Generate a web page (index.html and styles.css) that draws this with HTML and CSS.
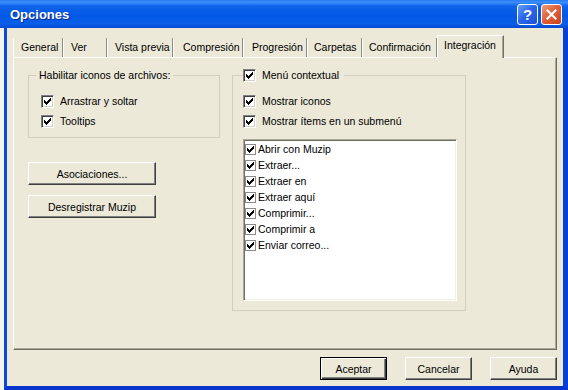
FILE: index.html
```html
<!DOCTYPE html>
<html lang="es">
<head>
  <meta charset="UTF-8">
  <title>Opciones</title>
  <link rel="stylesheet" href="styles.css">
</head>
<body>

  <div class="window">
    <!-- Title bar -->
    <div class="titlebar">
      <span class="title">Opciones</span>
      <div class="caption-btns">
        <span class="cap-btn cap-help">?</span>
        <span class="cap-btn cap-close">
          <svg width="11" height="11" viewBox="0 0 11 11"><path d="M1.5 1.5 9.5 9.5M9.5 1.5 1.5 9.5" stroke="#fff" stroke-width="2.2" stroke-linecap="square"/></svg>
        </span>
      </div>
    </div>

    <div class="frame">
      <!-- Tabs -->
      <div class="tabs">
        <span class="tab tab-general">General</span>
        <span class="tab tab-ver">Ver</span>
        <span class="tab tab-vista">Vista previa</span>
        <span class="tab tab-compresion">Compresión</span>
        <span class="tab tab-progresion">Progresión</span>
        <span class="tab tab-carpetas">Carpetas</span>
        <span class="tab tab-confirmacion">Confirmación</span>
        <span class="tab tab-integracion active">Integración</span>
      </div>

      <!-- Tab page -->
      <div class="panel">
        <div class="col-left">
          <fieldset class="group group-files">
            <legend>Habilitar iconos de archivos:</legend>
            <div class="check-row">
              <span class="cb"><svg width="7" height="7" viewBox="0 0 7 7"><path d="M0 2h1v1h1v1h1v-1h1v-1h1v-1h1v-1h1v3h-1v1h-1v1h-1v1h-1v1h-1v-1h-1v-1h-1v-1h-1z"/></svg></span>
              <span>Arrastrar y soltar</span>
            </div>
            <div class="check-row">
              <span class="cb"><svg width="7" height="7" viewBox="0 0 7 7"><path d="M0 2h1v1h1v1h1v-1h1v-1h1v-1h1v-1h1v3h-1v1h-1v1h-1v1h-1v1h-1v-1h-1v-1h-1v-1h-1z"/></svg></span>
              <span>Tooltips</span>
            </div>
          </fieldset>

          <button class="btn btn-wide btn-assoc">Asociaciones...</button>
          <button class="btn btn-wide btn-unreg">Desregistrar Muzip</button>
        </div>

        <fieldset class="group group-menu">
          <legend>
            <span class="legend-check">
              <span class="cb"><svg width="7" height="7" viewBox="0 0 7 7"><path d="M0 2h1v1h1v1h1v-1h1v-1h1v-1h1v-1h1v3h-1v1h-1v1h-1v1h-1v1h-1v-1h-1v-1h-1v-1h-1z"/></svg></span>
              <span>Menú contextual</span>
            </span>
          </legend>
          <div class="check-row">
            <span class="cb"><svg width="7" height="7" viewBox="0 0 7 7"><path d="M0 2h1v1h1v1h1v-1h1v-1h1v-1h1v-1h1v3h-1v1h-1v1h-1v1h-1v1h-1v-1h-1v-1h-1v-1h-1z"/></svg></span>
            <span>Mostrar iconos</span>
          </div>
          <div class="check-row">
            <span class="cb"><svg width="7" height="7" viewBox="0 0 7 7"><path d="M0 2h1v1h1v1h1v-1h1v-1h1v-1h1v-1h1v3h-1v1h-1v1h-1v1h-1v1h-1v-1h-1v-1h-1v-1h-1z"/></svg></span>
            <span>Mostrar ítems en un submenú</span>
          </div>

          <!-- Context menu entries -->
          <div class="list">
            <div class="list-item"><span class="cb-small"><svg width="7" height="7" viewBox="0 0 7 7"><path d="M0 2h1v1h1v1h1v-1h1v-1h1v-1h1v-1h1v3h-1v1h-1v1h-1v1h-1v1h-1v-1h-1v-1h-1v-1h-1z"/></svg></span><span>Abrir con Muzip</span></div>
            <div class="list-item"><span class="cb-small"><svg width="7" height="7" viewBox="0 0 7 7"><path d="M0 2h1v1h1v1h1v-1h1v-1h1v-1h1v-1h1v3h-1v1h-1v1h-1v1h-1v1h-1v-1h-1v-1h-1v-1h-1z"/></svg></span><span>Extraer...</span></div>
            <div class="list-item"><span class="cb-small"><svg width="7" height="7" viewBox="0 0 7 7"><path d="M0 2h1v1h1v1h1v-1h1v-1h1v-1h1v-1h1v3h-1v1h-1v1h-1v1h-1v1h-1v-1h-1v-1h-1v-1h-1z"/></svg></span><span>Extraer en</span></div>
            <div class="list-item"><span class="cb-small"><svg width="7" height="7" viewBox="0 0 7 7"><path d="M0 2h1v1h1v1h1v-1h1v-1h1v-1h1v-1h1v3h-1v1h-1v1h-1v1h-1v1h-1v-1h-1v-1h-1v-1h-1z"/></svg></span><span>Extraer aquí</span></div>
            <div class="list-item"><span class="cb-small"><svg width="7" height="7" viewBox="0 0 7 7"><path d="M0 2h1v1h1v1h1v-1h1v-1h1v-1h1v-1h1v3h-1v1h-1v1h-1v1h-1v1h-1v-1h-1v-1h-1v-1h-1z"/></svg></span><span>Comprimir...</span></div>
            <div class="list-item"><span class="cb-small"><svg width="7" height="7" viewBox="0 0 7 7"><path d="M0 2h1v1h1v1h1v-1h1v-1h1v-1h1v-1h1v3h-1v1h-1v1h-1v1h-1v1h-1v-1h-1v-1h-1v-1h-1z"/></svg></span><span>Comprimir a</span></div>
            <div class="list-item"><span class="cb-small"><svg width="7" height="7" viewBox="0 0 7 7"><path d="M0 2h1v1h1v1h1v-1h1v-1h1v-1h1v-1h1v3h-1v1h-1v1h-1v1h-1v1h-1v-1h-1v-1h-1v-1h-1z"/></svg></span><span>Enviar correo...</span></div>
          </div>
        </fieldset>
      </div>

      <!-- Dialog buttons -->
      <div class="footer">
        <button class="btn btn-small btn-default">Aceptar</button>
        <button class="btn btn-small">Cancelar</button>
        <button class="btn btn-small">Ayuda</button>
      </div>
    </div>
  </div>

</body>
</html>
```

FILE: styles.css
```css
/* Basic Styles */
body {
  margin: 0;
  font-family: "Liberation Sans", Arial, sans-serif;
  font-size: 10.5px;
  color: #000;
  background-color: #f4f3ee;
}

.window {
  width: 568px;
  height: 390px;
  display: flex;
  flex-direction: column;
}

/* Title bar */
.titlebar {
  flex: none;
  height: 28px;
  box-sizing: border-box;
  padding: 0 6px 0 10px;
  display: flex;
  align-items: center;
  justify-content: space-between;
  background: linear-gradient(to bottom, #2a7af4 0%, #3d8ff8 8%, #0f63eb 22%, #0258e6 55%, #0a5ee9 85%, #0849d2 100%);
}

.title {
  color: #fff;
  font-weight: bold;
  font-size: 13px;
  text-shadow: 1px 1px #0a2a8a;
}

.caption-btns {
  display: flex;
  gap: 3px;
  margin-top: 1px;
}

.cap-btn {
  width: 21px;
  height: 21px;
  box-sizing: border-box;
  border: 1px solid #fff;
  border-radius: 3px;
  display: flex;
  align-items: center;
  justify-content: center;
}

.cap-help {
  background: linear-gradient(135deg, #6aa0fb 0%, #2c68ec 45%, #1a4fd6 100%);
  color: #fff;
  font-weight: bold;
  font-size: 15px;
  line-height: 1;
}

.cap-close {
  background: linear-gradient(135deg, #f19c7c 0%, #e2603a 45%, #c8421c 100%);
}

/* Window frame + client area */
.frame {
  flex: 1;
  margin-left: 4px;
  border-left: 3px solid #0a4ad8;
  border-right: 5px solid #0a3fd6;
  border-bottom: 4px solid #0836cc;
  background-color: #ece9d8;
  padding: 7px 6px 6px;
  display: flex;
  flex-direction: column;
}

/* Tabs */
.tabs {
  height: 22px;
  display: flex;
  align-items: flex-end;
  position: relative;
  z-index: 1;
}

.tab {
  height: 19px;
  box-sizing: border-box;
  padding-left: 7px;
  line-height: 19px;
  white-space: nowrap;
  border-left: 1px solid #fff;
  border-right: 1px solid #8d8b80;
}

.tab-general { width: 50px; }
.tab-ver { width: 44px; }
.tab-vista { width: 66px; }
.tab-compresion { width: 70px; padding-left: 9px; }
.tab-progresion { width: 64px; padding-left: 8px; }
.tab-carpetas { width: 55px; padding-left: 6px; }
.tab-confirmacion { width: 75px; padding-left: 6px; }
.tab-integracion { width: 67px; padding-left: 6px; }

.tab.active {
  height: 23px;
  margin-bottom: -1px;
  border-top: 1px solid #fff;
  border-right: 1px solid #716f64;
  box-shadow: inset -1px 0 #aca899;
  background-color: #ece9d8;
}

/* Tab page */
.panel {
  height: 293px;
  box-sizing: border-box;
  border: 1px solid;
  border-color: #fff #716f64 #716f64 #fff;
  box-shadow: inset -1px -1px #aca899;
  padding: 11px 0 0 14px;
  display: flex;
  gap: 12px;
  align-items: flex-start;
}

.col-left {
  width: 192px;
  display: flex;
  flex-direction: column;
}

/* Group boxes */
.group {
  margin: 0;
  min-width: 0;
  border: 1px solid #d0d0bf;
}

.group legend {
  line-height: 13px;
}

.group-files {
  padding: 9px 0 6px 12px;
}

.group-files legend {
  padding: 0 3px;
  margin-left: -5px;
}

.group-menu {
  width: 234px;
  box-sizing: border-box;
  padding: 9px 0 9px 10px;
}

.group-menu legend {
  padding: 0 5px 0 0;
}

.legend-check {
  display: flex;
  align-items: center;
  gap: 6px;
}

.check-row {
  height: 20px;
  display: flex;
  align-items: center;
  gap: 6px;
}

/* Check boxes */
.cb {
  flex: none;
  width: 13px;
  height: 13px;
  box-sizing: border-box;
  border: 1px solid;
  border-color: #808080 #fff #fff #808080;
  box-shadow: inset 1px 1px #404040, inset -1px -1px #d4d0c8;
  background-color: #fff;
  display: flex;
  align-items: center;
  justify-content: center;
}

.cb svg,
.cb-small svg {
  display: block;
  fill: #000;
  shape-rendering: crispEdges;
}

.cb-small {
  flex: none;
  width: 11px;
  height: 11px;
  box-sizing: border-box;
  border: 1px solid #8a8a8a;
  background-color: #fff;
  display: flex;
  align-items: center;
  justify-content: center;
}

/* List box */
.list {
  margin: 8px 0 0 0;
  width: 214px;
  height: 162px;
  box-sizing: border-box;
  padding: 1px 0 0 1px;
  background-color: #fff;
  border: 1px solid;
  border-color: #aca899 #fff #fff #aca899;
  box-shadow: inset 1px 1px #716f64, inset -1px -1px #f1efe2;
}

.list-item {
  height: 16px;
  display: flex;
  align-items: center;
  gap: 2px;
  white-space: nowrap;
}

/* Button Styling */
.btn {
  height: 23px;
  box-sizing: border-box;
  padding: 0;
  font: inherit;
  color: #000;
  background-color: #ece9d8;
  border: 1px solid;
  border-color: #fff #404040 #404040 #fff;
  box-shadow: inset -1px -1px #808080;
}

.btn-wide {
  width: 128px;
}

.btn-assoc {
  margin-top: 24px;
}

.btn-unreg {
  margin-top: 10px;
}

.btn-small {
  width: 67px;
}

.btn-default {
  border-color: #000;
  box-shadow: inset 1px 1px #fff, inset -1px -1px #404040, inset -2px -2px #808080;
}

/* Footer buttons */
.footer {
  margin-top: 7px;
  display: flex;
  justify-content: flex-end;
  gap: 18px;
}
```
